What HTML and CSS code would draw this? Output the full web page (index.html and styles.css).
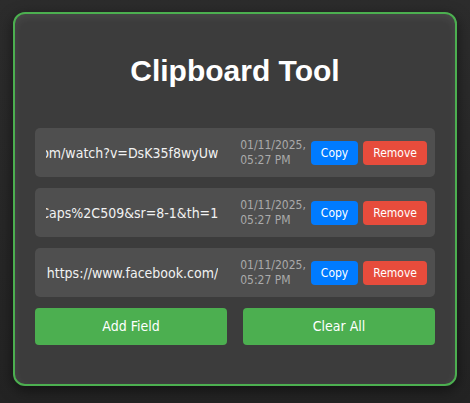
FILE: index.html
```html
<!DOCTYPE html>
<html lang="en">
<head>
<meta charset="utf-8">
<title>Clipboard Tool</title>
<link rel="stylesheet" href="styles.css">
</head>
<body>
<div class="panel">
  <h1 class="title">Clipboard Tool</h1>
  <div class="list">
    <div class="item">
      <div class="item-text"><span>https://www.youtube.com/watch?v=DsK35f8wyUw</span></div>
      <div class="item-date">01/11/2025,<br>05:27 PM</div>
      <button class="btn btn-copy">Copy</button>
      <button class="btn btn-remove">Remove</button>
    </div>
    <div class="item">
      <div class="item-text"><span>https://www.amazon.com/s?k=keyboard&amp;crid=2X&amp;sprefix=Caps%2C509&amp;sr=8-1&amp;th=1</span></div>
      <div class="item-date">01/11/2025,<br>05:27 PM</div>
      <button class="btn btn-copy">Copy</button>
      <button class="btn btn-remove">Remove</button>
    </div>
    <div class="item">
      <div class="item-text"><span>https://www.facebook.com/</span></div>
      <div class="item-date">01/11/2025,<br>05:27 PM</div>
      <button class="btn btn-copy">Copy</button>
      <button class="btn btn-remove">Remove</button>
    </div>
  </div>
  <div class="actions">
    <button class="btn-main">Add Field</button>
    <button class="btn-main">Clear All</button>
  </div>
</div>
</body>
</html>
```

FILE: styles.css
```css
html, body {
  margin: 0;
  padding: 0;
}
body {
  background: linear-gradient(#2c2c2c, #232323);
  min-height: 403px;
  padding: 12px 13px;
  box-sizing: border-box;
  font-family: "DejaVu Sans Condensed", "Liberation Sans", sans-serif;
}
.panel {
  width: 444px;
  box-sizing: border-box;
  background: #3c3c3c;
  border: 2px solid #4caf50;
  border-radius: 12px;
  padding: 20px 20px 39px;
  box-shadow: 0 4px 14px rgba(0, 0, 0, 0.5), inset 0 3px 8px rgba(255, 255, 255, 0.07);
}
.title {
  font-family: "Liberation Sans", Arial, sans-serif;
  font-weight: bold;
  font-size: 30px;
  line-height: 34px;
  color: #ffffff;
  text-align: center;
  margin: 20px 0 40px;
}
.list {
  display: flex;
  flex-direction: column;
  gap: 11px;
}
.item {
  display: flex;
  align-items: center;
  background: #4f4f4f;
  border-radius: 5px;
  padding: 10px 8px 10px 11px;
}
.item-text {
  flex: 1;
  min-width: 0;
  display: flex;
  justify-content: flex-end;
  overflow: hidden;
  white-space: nowrap;
  color: #f2f2f2;
  font-size: 14px;
  margin-right: 22px;
}
.item-text span {
  flex: none;
}
.item-date {
  color: #aaaaaa;
  font-size: 12px;
  line-height: 14.5px;
  margin-right: 5px;
  white-space: nowrap;
}
.btn {
  font-family: inherit;
  font-size: 12px;
  line-height: 14px;
  color: #ffffff;
  border: none;
  border-radius: 4px;
  padding: 5px 10px;
  cursor: pointer;
}
.btn-copy {
  background: #007bff;
  margin-right: 5px;
}
.btn-remove {
  background: #e74c3c;
}
.actions {
  display: grid;
  grid-template-columns: 1fr 1fr;
  gap: 16px;
  margin-top: 11px;
}
.btn-main {
  font-family: inherit;
  font-size: 14px;
  line-height: 17px;
  color: #ffffff;
  background: #4caf50;
  border: none;
  border-radius: 4px;
  padding: 10px;
  cursor: pointer;
}
```
